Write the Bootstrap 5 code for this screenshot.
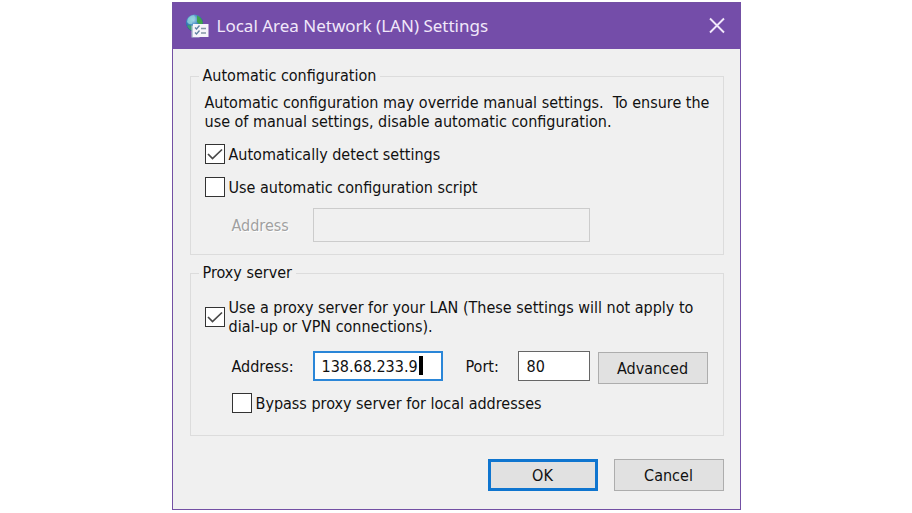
<!DOCTYPE html>
<html lang="en">
<head>
<meta charset="utf-8">
<meta name="viewport" content="width=device-width, initial-scale=1">
<title>Local Area Network (LAN) Settings</title>
<link href="https://cdn.jsdelivr.net/npm/bootstrap@5.3.0/dist/css/bootstrap.min.css" rel="stylesheet">
<style>
body { font-family: "DejaVu Sans Condensed", "DejaVu Sans", sans-serif; font-size: 16px; line-height: 19px; color: #111; background: #fff; }
.dialog { max-width: 569px; background: #f0f0f0; border: 1px solid #7350a4; margin-top: 2px; }
.title-bar { background: #744da9; color: #f1e8fa; height: 46px; padding: 0 14px 0 12px; }
.title-text { font-family: "Noto Sans", "Open Sans", sans-serif; font-size: 17px; line-height: 24px; font-weight: 400; }
.close-btn { width: 18px; height: 18px; line-height: 0; color: #f1e8fa; }
.dialog-body { padding: 17px 16px 18px 17px; }
.group { border: 1px solid #dcdcdc; padding: 0 12px 0 14px; margin-bottom: 8px; }
.group legend { float: none; width: auto; font-size: 16px; line-height: 20px; padding: 0 4px; margin: 0 0 0 -6px; }
.intro { padding-top: 7px; margin-bottom: 13px; }
.stack { display: flex; flex-direction: column; }
.auto-stack { gap: 13px; padding-bottom: 12px; }
.script-stack { gap: 11px; }
.proxy-stack { gap: 12px; padding: 15px 0 22px; }
.server-stack { gap: 9px; }
.tick { appearance: none; flex: none; width: 20px; height: 20px; margin: 0; border: 1px solid #333; border-radius: 0; background: #fff center / 18px 18px no-repeat; }
.tick:checked { background-image: url("data:image/svg+xml,%3Csvg xmlns='http://www.w3.org/2000/svg' viewBox='0 0 18 18'%3E%3Cpath d='M2 9l4.500 4.500L16 4.500' fill='none' stroke='%23484848' stroke-width='1.700'/%3E%3C/svg%3E"); }
.tick-row { gap: 4px; }
.sub-row { padding-left: 27px; }
.field-label { width: 81px; }
.port-label { width: 52px; margin-left: 23px; }
.field { border: 1px solid #666; border-radius: 0; background: #fff; color: #111; padding: 0 8px; height: 30px; font-size: 16px; outline: 0; }
.field:disabled { height: 34px; width: 277px; background: #f0f0f0; border-color: #ccc; }
.field-host { width: 130px; border: 2px solid #2a86d8; padding: 0 7px; }
.field-port { width: 72px; margin-right: 8px; }
.muted-label { color: #a0a0a0; text-shadow: 1px 1px 0 #fff; }
.caret-block { position: absolute; left: 106px; top: 5px; width: 4px; height: 19px; background: #000; }
.push-btn { width: 110px; height: 32px; padding: 0; font-size: 16px; line-height: 19px; color: #111; background: #e1e1e1; border: 1px solid #adadad; border-radius: 0; }
.push-default { border: 3px solid #0f75cf; }
.actions { padding-top: 15px; gap: 16px; }
</style>
</head>
<body>
<main class="dialog mx-auto" role="dialog" aria-labelledby="dialog-title">
  <header class="title-bar d-flex align-items-center">
    <svg width="24" height="24" viewBox="0 0 24 24" aria-hidden="true">
      <defs><radialGradient id="globe" cx=".4" cy=".3" r=".8"><stop offset="0" stop-color="#b5e3f3"/><stop offset=".45" stop-color="#3b83bd"/><stop offset="1" stop-color="#173a78"/></radialGradient></defs>
      <circle cx="9.500" cy="9" r="8.600" fill="url(#globe)"/>
      <path d="M3 4.500Q6 1 9 1.200L10.500 4 7.500 7 7 10 4 10 2 8z" fill="#8fcfd9" opacity=".8"/>
      <path d="M12 1.500q5 2 6 7.500l-2.500 2.500-3.500-3.500z" fill="#3fa34d"/>
      <path d="M3 11l5 1v5q-4-1-5.500-4.500z" fill="#3f9a72"/>
      <path d="M6.500 11.500h8v12h-8z" fill="#b9c9d6"/>
      <path d="M8 10h15.500v13H8z" fill="#f6f4fa"/>
      <path d="M10 13.500l1.500 1.500 3-3.500M10 18.500l1.500 1.500 3-3.500" fill="none" stroke="#5f80a0" stroke-width="1.300"/>
      <path d="M16 14.500h5M16 19h5" stroke="#8595a5" stroke-width="1.500"/>
    </svg>
    <h1 class="title-text mb-0 ms-2 flex-grow-1" id="dialog-title">Local Area Network (LAN) Settings</h1>
    <button type="button" class="close-btn btn p-0 border-0" aria-label="Close">
      <svg width="18" height="18" viewBox="0 0 18 18" aria-hidden="true"><path d="M2 1.500l14 14M16 1.500l-14 14" stroke="currentColor" stroke-width="1.900"/></svg>
    </button>
  </header>
  <form class="dialog-body">
    <fieldset class="group">
      <legend>Automatic configuration</legend>
      <p class="intro">Automatic configuration may override manual settings.&nbsp; To ensure the use of manual settings, disable automatic configuration.</p>
      <div class="stack auto-stack">
        <div class="tick-row d-flex align-items-center">
          <input class="tick" type="checkbox" id="detect" checked>
          <label for="detect">Automatically detect settings</label>
        </div>
        <div class="stack script-stack">
          <div class="tick-row d-flex align-items-center">
            <input class="tick" type="checkbox" id="script">
            <label for="script">Use automatic configuration script</label>
          </div>
          <div class="sub-row d-flex align-items-center">
            <label class="field-label muted-label" for="script-address">Address</label>
            <input class="field" type="text" id="script-address" disabled>
          </div>
        </div>
      </div>
    </fieldset>
    <fieldset class="group">
      <legend>Proxy server</legend>
      <div class="stack proxy-stack">
        <div class="tick-row d-flex align-items-center">
          <input class="tick" type="checkbox" id="proxy" checked>
          <label for="proxy">Use a proxy server for your LAN (These settings will not apply to dial-up or VPN connections).</label>
        </div>
        <div class="stack server-stack">
          <div class="sub-row d-flex align-items-center">
            <label class="field-label" for="host">Address:</label>
            <div class="position-relative">
              <input class="field field-host d-block" type="text" id="host" value="138.68.233.9">
              <span class="caret-block"></span>
            </div>
            <label class="port-label" for="port">Port:</label>
            <input class="field field-port" type="text" id="port" value="80">
            <button type="button" class="push-btn btn mt-1">Advanced</button>
          </div>
          <div class="sub-row tick-row d-flex align-items-center">
            <input class="tick" type="checkbox" id="bypass">
            <label for="bypass">Bypass proxy server for local addresses</label>
          </div>
        </div>
      </div>
    </fieldset>
    <div class="actions d-flex justify-content-end">
      <button type="submit" class="push-btn push-default btn">OK</button>
      <button type="button" class="push-btn btn">Cancel</button>
    </div>
  </form>
</main>
<script src="https://cdn.jsdelivr.net/npm/bootstrap@5.3.0/dist/js/bootstrap.bundle.min.js"></script>
</body>
</html>
